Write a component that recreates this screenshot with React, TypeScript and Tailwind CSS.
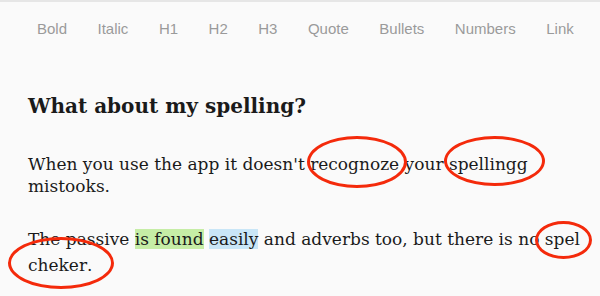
const TOOLS = ["Bold", "Italic", "H1", "H2", "H3", "Quote", "Bullets", "Numbers", "Link"];

// red hand-drawn circle around a misspelled word
function Marked({ children, ring }: { children: React.ReactNode; ring: string }) {
  return (
    <span className="relative">
      {children}
      <span className={`pointer-events-none absolute rounded-[50%] border-[3px] border-[#f42a0b] ${ring}`} />
    </span>
  );
}

export default function App() {
  return (
    <div className="h-[296px] w-[600px] overflow-hidden border-t-2 border-[#e6e6e6] bg-[#fafafa]">
      <div className="flex gap-[30.5px] pl-[37px] pt-[18px] font-['Liberation_Sans',Arial,sans-serif] text-[15px] leading-[18px] text-[#9a9a9a]">
        {TOOLS.map((t) => (
          <span key={t}>{t}</span>
        ))}
      </div>

      <div className="pl-7 font-['DejaVu_Serif',serif] text-[#1a1a1a]">
        <h2 className="mt-[55px] text-[20px] font-bold leading-[26px]">What about my spelling?</h2>

        <p className="mt-[34px] text-[17px] leading-[22px]">
          When you use the app it doesn't{" "}
          <Marked ring="-left-[3px] -right-[8px] -top-[18px] -bottom-[14px]">recognoze</Marked> your{" "}
          <Marked ring="-left-[5px] -right-[17px] -top-[18px] -bottom-[12px]">spellingg</Marked> mistooks.
        </p>

        <p className="mt-[29px] text-[17px] leading-[26px]">
          The passive <span className="bg-[#c6eda6]">is found</span>{" "}
          <span className="bg-[#c9e6f7]">easily</span> and adverbs too, but there is no{" "}
          <Marked ring="-left-[10px] -right-[12px] -top-[8px] -bottom-[10px]">spel</Marked>{" "}
          <Marked ring="-left-[20px] -right-[27px] -top-[18px] -bottom-[14px]">cheker</Marked>.
        </p>
      </div>
    </div>
  );
}
